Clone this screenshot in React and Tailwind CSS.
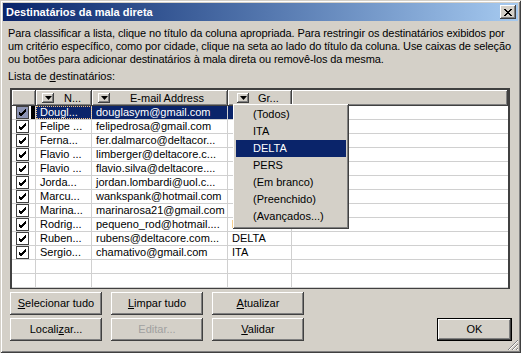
import React from "react";

const rows = [
  ["Dougl...", "douglasym@gmail.com", ""],
  ["Felipe ...", "felipedrosa@gmail.com", ""],
  ["Ferna...", "fer.dalmarco@deltacor...", ""],
  ["Flavio ...", "limberger@deltacore.c...", ""],
  ["Flavio ...", "flavio.silva@deltacore....", ""],
  ["Jorda...", "jordan.lombardi@uol.c...", ""],
  ["Marcu...", "wankspank@hotmail.com", ""],
  ["Marina...", "marinarosa21@gmail.com", ""],
  ["Rodrig...", "pequeno_rod@hotmail....", "PERS"],
  ["Ruben...", "rubens@deltacore.com...", "DELTA"],
  ["Sergio...", "chamativo@gmail.com", "ITA"],
  ["", "", ""],
  ["", "", ""],
];

const menu = ["(Todos)", "ITA", "DELTA", "PERS", "(Em branco)", "(Preenchido)", "(Avançados...)"];

const raised =
  "shadow-[inset_-1px_-1px_#404040,inset_1px_1px_#ffffff,inset_-2px_-2px_#808080,inset_2px_2px_#d4d0c8]";

const Check = ({ tint }) => (
  <div
    className={`w-[13px] h-[13px] border border-[#404040] flex items-center justify-center ${
      tint ? "bg-[#8c94b4]" : "bg-white"
    }`}
  >
    <svg width="9" height="9" viewBox="0 0 9 9">
      <path d="M1 4 L3 6 L8 1 M1 5 L3 7 L8 2 M1 6 L3 8 L8 3" stroke="#000" strokeWidth="1" fill="none" />
    </svg>
  </div>
);

const Arrow = () => (
  <div className={`w-[12px] h-[10px] bg-[#d4d0c8] flex items-center justify-center ${raised}`}>
    <svg width="7" height="4" viewBox="0 0 7 4">
      <path d="M0 0 H7 L3.5 4 Z" fill="#000" />
    </svg>
  </div>
);

const Btn = ({ children, disabled, size = "h-[23px] w-[92px]" }) => (
  <button
    className={`${size} bg-[#d4d0c8] text-[11px] ${raised} ${disabled ? "text-[#a0a0a0]" : "text-black"}`}
  >
    {children}
  </button>
);

const App = () => {
  return (
    <div
      className="relative w-[521px] h-[353px] overflow-hidden bg-[#d4d0c8] text-black text-[11px] shadow-[inset_1px_1px_#d4d0c8,inset_-1px_-1px_#404040,inset_2px_2px_#ffffff,inset_-2px_-2px_#808080]"
      style={{ fontFamily: '"Liberation Sans", Arial, sans-serif' }}
    >
      {/* title bar */}
      <div className="mx-[3px] mt-[3px] h-[18px] bg-gradient-to-r from-[#0a246a] to-[#a6caf0] flex items-center justify-between pl-[3px] pr-[2px]">
        <span className="text-white font-bold text-[11px]">Destinatários da mala direta</span>
        <div className={`w-[16px] h-[14px] bg-[#d4d0c8] flex items-center justify-center ${raised}`}>
          <svg width="8" height="7" viewBox="0 0 8 7">
            <path d="M0 0 L7 7 M1 0 L8 7 M7 0 L0 7 M8 0 L1 7" stroke="#000" strokeWidth="1" />
          </svg>
        </div>
      </div>

      <div className="px-[8px]">
        <p className="mt-[6px] leading-[13px] whitespace-nowrap tracking-[-0.1px]">
          Para classificar a lista, clique no título da coluna apropriada. Para restringir os destinatários exibidos por
          <br />
          um critério específico, como por cidade, clique na seta ao lado do título da coluna. Use caixas de seleção
          <br />
          ou botões para adicionar destinatários à mala direta ou removê-los da mesma.
        </p>
        <p className="leading-[13px] mt-[4px]">
          Lista de <span className="underline">d</span>estinatários:
        </p>

        {/* list */}
        <div className="mt-[5px] ml-[2px] w-[500px] h-[201px] bg-white border-2 border-[#404040]">
          <div className="flex h-[16px] bg-[#d4d0c8]">
            <div className={`w-[24px] ${raised}`} />
            <div className={`w-[56px] flex items-center pl-[6px] ${raised}`}>
              <Arrow />
              <span className="ml-[10px]">N...</span>
            </div>
            <div className={`w-[136px] flex items-center pl-[6px] ${raised}`}>
              <Arrow />
              <span className="flex-1 text-center pr-[4px]">E-mail Address</span>
            </div>
            <div className={`w-[64px] flex items-center pl-[9px] ${raised}`}>
              <Arrow />
              <span className="ml-[9px]">Gr...</span>
            </div>
            <div className={`flex-1 ${raised}`} />
          </div>
          {rows.map((r, i) => {
            const sel = i === 0;
            return (
              <div key={i} className="flex h-[14px] border-b border-[#d0d0d0]">
                <div className="relative w-[24px] border-r border-[#d0d0d0] flex items-center pl-[4px]">
                  {r[0] && <Check tint={sel} />}
                  {sel && <div className="absolute right-0 top-0 h-[13px] w-[4px] bg-black" />}
                </div>
                <div
                  className={`w-[56px] border-r border-[#d0d0d0] pl-[4px] leading-[13px] whitespace-nowrap overflow-hidden ${
                    sel ? "bg-[#0a246a] text-white outline outline-1 outline-dotted outline-offset-[-1px] outline-[#f0c080]" : ""
                  }`}
                >
                  {r[0]}
                </div>
                <div
                  className={`w-[136px] border-r border-[#d0d0d0] pl-[4px] leading-[13px] whitespace-nowrap overflow-hidden ${
                    sel ? "bg-[#0a246a] text-white" : ""
                  }`}
                >
                  {r[1]}
                </div>
                <div
                  className={`w-[64px] border-r border-[#d0d0d0] pl-[4px] leading-[13px] whitespace-nowrap overflow-hidden ${
                    sel ? "bg-[#0a246a] text-white" : ""
                  }`}
                >
                  {r[2]}
                </div>
                <div className="flex-1" />
              </div>
            );
          })}
        </div>

        {/* buttons */}
        <div className="mt-[3px] ml-[2px] flex gap-[9px]">
          <Btn>
            <span className="underline">S</span>elecionar tudo
          </Btn>
          <Btn>
            <span className="underline">L</span>impar tudo
          </Btn>
          <Btn>
            <span className="underline">A</span>tualizar
          </Btn>
        </div>
        <div className="mt-[3px] ml-[2px] flex gap-[9px] items-start">
          <Btn>
            Locali<span className="underline">z</span>ar...
          </Btn>
          <Btn disabled>Editar...</Btn>
          <Btn>
            <span className="underline">V</span>alidar
          </Btn>
          <div className="flex-1" />
          <div className="mr-[1px] border border-black flex">
            <Btn size="h-[21px] w-[73px]">OK</Btn>
          </div>
        </div>
      </div>

      {/* dropdown popup */}
      <div className={`absolute left-[233px] top-[104px] w-[116px] h-[125px] bg-[#d4d0c8] px-[3px] pt-[2px] ${raised}`}>
        {menu.map((m, i) => (
          <div
            key={m}
            className={`h-[17px] leading-[17px] pl-[17px] ${i === 2 ? "bg-[#0a246a] text-white" : ""}`}
          >
            {m}
          </div>
        ))}
      </div>

      {/* size grip */}
      <svg className="absolute right-[2px] bottom-[2px]" width="12" height="12" viewBox="0 0 12 12">
        <path d="M11 1 L1 11 M11 5 L5 11 M11 9 L9 11" stroke="#808080" strokeWidth="1" />
        <path d="M11 2 L2 11 M11 6 L6 11 M11 10 L10 11" stroke="#ffffff" strokeWidth="1" />
      </svg>
    </div>
  );
};

export default App;
